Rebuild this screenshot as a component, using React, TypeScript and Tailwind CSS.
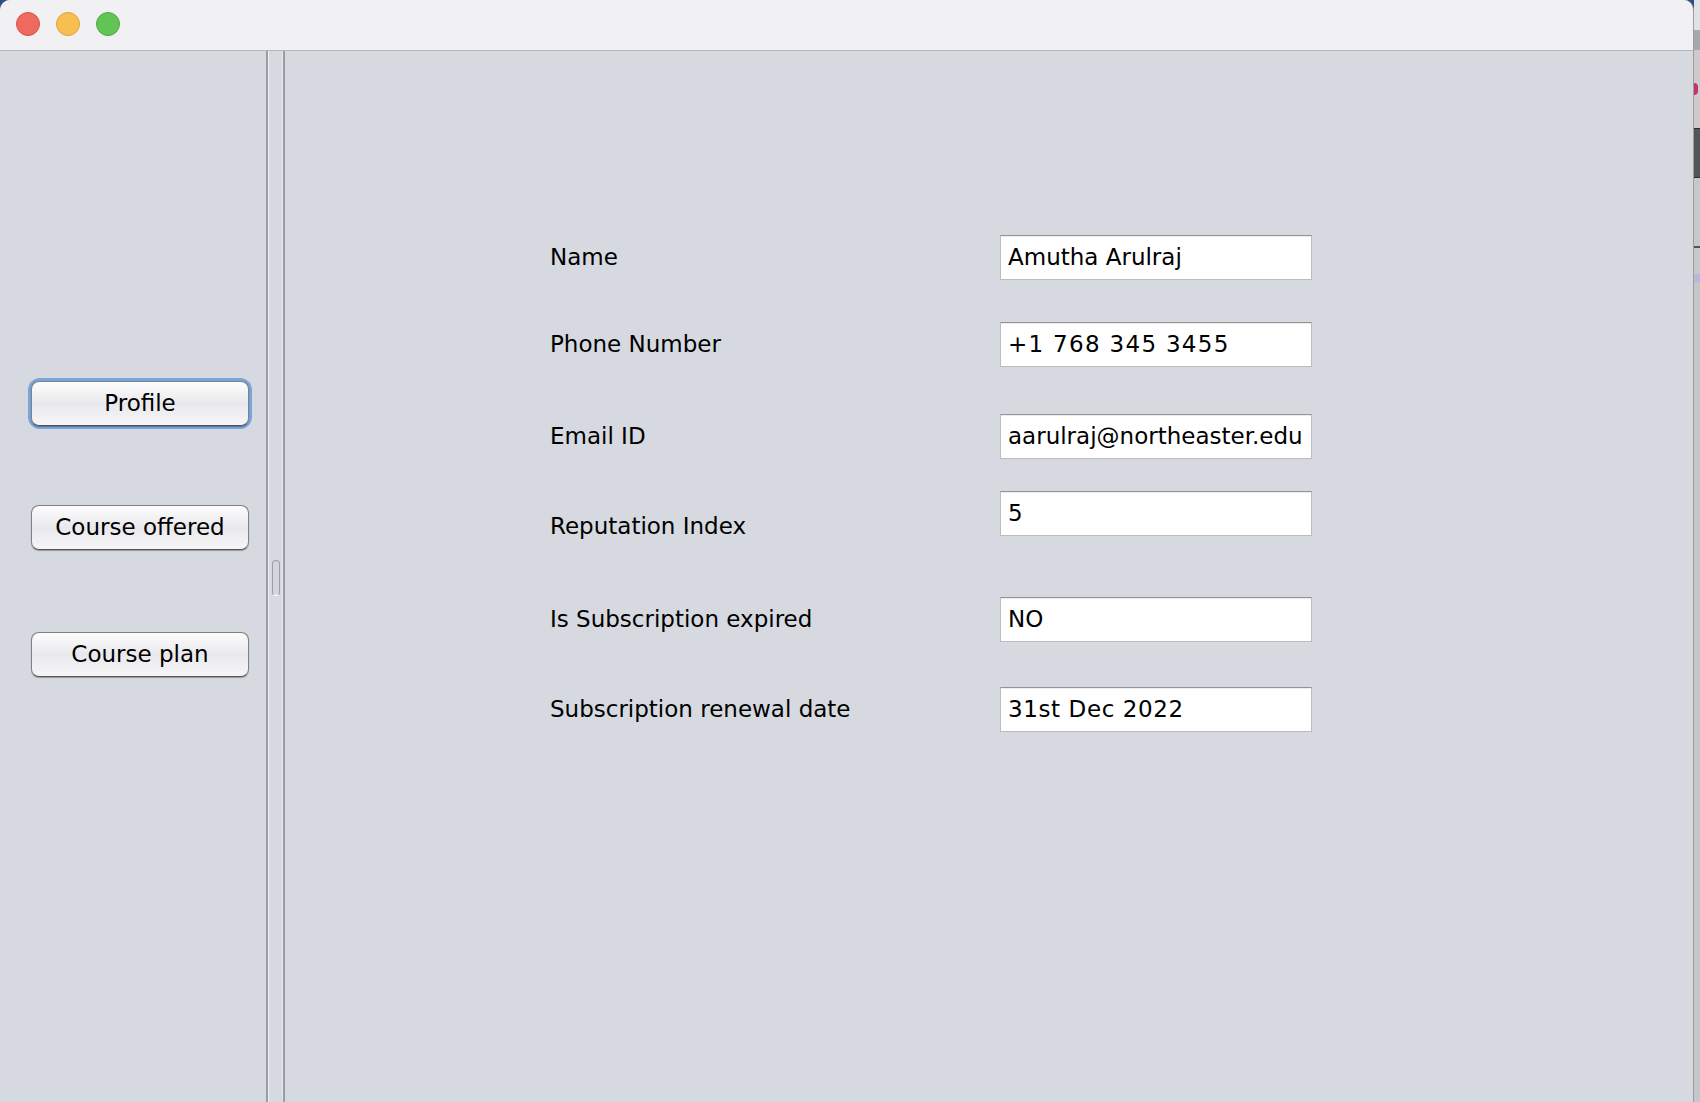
import React from "react";

const font = { fontFamily: '"DejaVu Sans", "Liberation Sans", sans-serif' };

const fields = [
  { label: "Name", value: "Amutha Arulraj", gap: "mt-[184px]", labelShift: "", track: "" },
  { label: "Phone Number", value: "+1 768 345 3455", gap: "mt-[42px]", labelShift: "", track: "tracking-[1.3px]" },
  { label: "Email ID", value: "aarulraj@northeaster.edu", gap: "mt-[47px]", labelShift: "", track: "" },
  { label: "Reputation Index", value: "5", gap: "mt-[32px]", labelShift: "translate-y-[13px]", track: "" },
  { label: "Is Subscription expired", value: "NO", gap: "mt-[61px]", labelShift: "", track: "" },
  { label: "Subscription renewal date", value: "31st Dec 2022", gap: "mt-[45px]", labelShift: "", track: "tracking-[0.6px]" },
];

function AquaButton({ label, focused, gap }: { label: string; focused?: boolean; gap: string }) {
  return (
    <div
      className={`${gap} ml-[31px] w-[218px] rounded-[9px] ${
        focused ? "ring-[3px] ring-[#78a6dc]" : ""
      }`}
    >
      <button
        className="w-full h-[45px] rounded-[8px] border border-[#7f7f84] border-b-[#55555a] bg-gradient-to-b from-[#fdfdfd] via-[#e9e9ed] to-[#f6f6f8] text-[23px] text-black shadow-[0_1px_1px_rgba(0,0,0,0.3)] leading-none"
        style={font}
      >
        {label}
      </button>
    </div>
  );
}

export default function App() {
  return (
    <div className="w-[1700px] h-[1102px] flex bg-[#c9c9cb] overflow-hidden" style={font}>
      {/* window */}
      <div className="w-[1694px] h-full flex flex-col bg-[#2c4f86]">
        <div className="flex-1 flex flex-col rounded-t-[10px] overflow-hidden border-r border-[#9d9da0] bg-[#d6d9df]">
          {/* title bar */}
          <div className="h-[51px] shrink-0 bg-[#f1f0f3] border-b border-[#b6b6b9] flex items-center gap-[16px] pl-[16px] pb-[2px]">
            <span className="w-[24px] h-[24px] rounded-full bg-[#ee6a5f] border border-[#d65247]" />
            <span className="w-[24px] h-[24px] rounded-full bg-[#f6bf4f] border border-[#d9a23a]" />
            <span className="w-[24px] h-[24px] rounded-full bg-[#61c454] border border-[#4ea943]" />
          </div>

          <div className="flex-1 flex">
            {/* left nav */}
            <div className="w-[266px] shrink-0 flex flex-col">
              <AquaButton label="Profile" focused gap="mt-[330px]" />
              <AquaButton label="Course offered" gap="mt-[79px]" />
              <AquaButton label="Course plan" gap="mt-[82px]" />
            </div>

            {/* split divider */}
            <div className="w-[19px] shrink-0 flex">
              <div className="w-[2px] bg-[#9a9ca3]" />
              <div className="w-[1px] bg-[#eef0f3]" />
              <div className="flex-1 flex flex-col items-center pt-[509px]">
                <div className="w-[8px] h-[36px] rounded-full border border-[#9c9ea5] border-b-[#ffffff] bg-[#d3d6dc]" />
              </div>
              <div className="w-[1px] bg-[#e6e8ec]" />
              <div className="w-[2px] bg-[#9a9ca3]" />
            </div>

            {/* form panel */}
            <div className="flex-1 flex flex-col">
              {fields.map((f) => (
                <div key={f.label} className={`${f.gap} flex items-center`}>
                  <div className={`w-[715px] pl-[265px] shrink-0 text-[23px] text-black whitespace-nowrap ${f.labelShift}`}>
                    {f.label}
                  </div>
                  <div
                    className={`w-[312px] h-[45px] bg-white border border-[#bdbdbf] border-t-[#949496] shadow-[inset_0_1px_1px_rgba(0,0,0,0.08)] flex items-center pl-[7px] text-[23px] text-black whitespace-nowrap overflow-hidden ${f.track}`}
                  >
                    {f.value}
                  </div>
                </div>
              ))}
            </div>
          </div>
        </div>
      </div>

      {/* desktop behind the window, right edge */}
      <div className="flex-1 flex flex-col">
        <div className="h-[30px] bg-[#e2e2e4]" />
        <div className="h-[20px] bg-[#a8a8aa]" />
        <div className="h-[78px] bg-[#cfc9cc] flex items-center">
          <div className="w-[4px] h-[12px] bg-[#c0356a] rounded-r-full" />
        </div>
        <div className="h-[50px] bg-[#555557] border-y border-[#2e2e30]" />
        <div className="h-[68px] bg-[#c8c8ca]" />
        <div className="h-[2px] bg-[#555557]" />
        <div className="h-[26px] bg-[#c8c8ca]" />
        <div className="h-[8px] bg-[#b8b8dc]" />
        <div className="flex-1 bg-[#c6c6c8]" />
      </div>
    </div>
  );
}
